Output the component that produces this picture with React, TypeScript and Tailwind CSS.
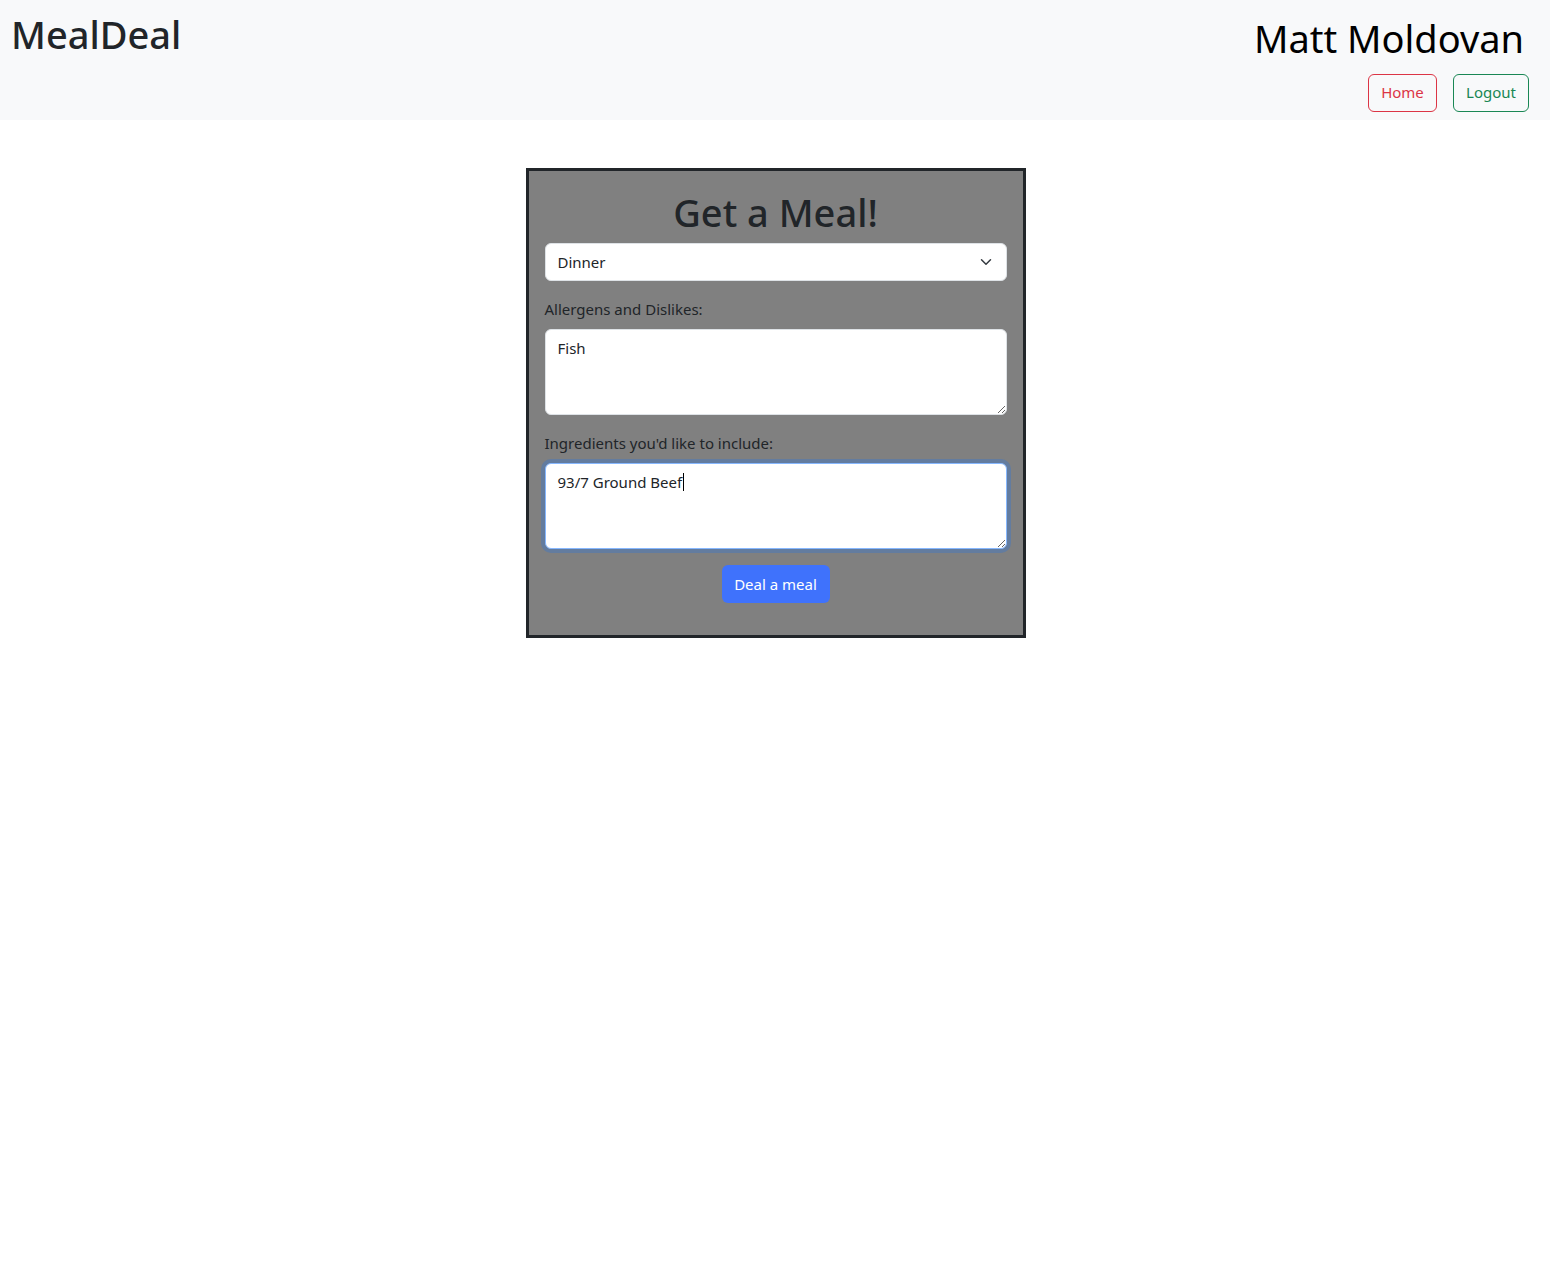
import React from "react";

const font = { fontFamily: '"Noto Sans", "Open Sans", sans-serif' };

export default function App() {
  return (
    <div className="min-h-[1268px] bg-white text-[#212529]" style={font}>
      <nav className="flex h-[120px] items-start justify-between bg-[#f8f9fa]">
        <h1 className="ml-[11px] mt-[12px] text-[38px] font-medium leading-[1.2] text-[#212529]">MealDeal</h1>
        <div className="mr-[21px] mt-[16px] flex flex-col items-end">
          <div className="mr-[5px] text-[38px] leading-[1.2] text-black">Matt Moldovan</div>
          <div className="mt-[12px] flex gap-4">
            <button className="h-[38px] w-[69px] rounded-[6px] border border-[#dc3545] text-[15px] text-[#dc3545]">Home</button>
            <button className="h-[38px] w-[76px] rounded-[6px] border border-[#198754] text-[15px] text-[#198754]">Logout</button>
          </div>
        </div>
      </nav>
      <div className="flex justify-center pt-[48px]">
        <div className="ml-[1px] w-[500px] border-[3px] border-[#212529] bg-[#808080] px-4 pb-[32px] pt-4">
          <h1 className="mb-2 pt-[2px] text-center text-[38px] font-medium leading-[46px] text-[#212529]">Get a Meal!</h1>
          <div className="relative">
            <select
              defaultValue="Dinner"
              className="block h-[38px] w-full appearance-none rounded-[6px] border border-[#dee2e6] bg-white pl-3 pr-9 text-[15px] text-[#212529] outline-none"
            >
              <option>Breakfast</option>
              <option>Lunch</option>
              <option>Dinner</option>
            </select>
            <svg className="pointer-events-none absolute right-[13px] top-[13px]" width="16" height="12" viewBox="0 0 16 16">
              <path d="m2 5 6 6 6-6" fill="none" stroke="#343a40" strokeLinecap="round" strokeLinejoin="round" strokeWidth="2" />
            </svg>
          </div>
          <label className="mb-2 mt-4 block text-[15px] leading-6 text-[#212529]">Allergens and Dislikes:</label>
          <textarea
            rows={3}
            defaultValue="Fish"
            className="block h-[86px] w-full rounded-[6px] border border-[#dee2e6] bg-white px-3 py-[6px] text-[15px] leading-6 text-[#212529] outline-none"
          />
          <label className="mb-2 mt-4 block text-[15px] leading-6 text-[#212529]">Ingredients you'd like to include:</label>
          <div className="relative">
            <textarea
              rows={3}
              defaultValue="93/7 Ground Beef"
              className="block h-[86px] w-full rounded-[6px] border border-[#86b7fe] bg-white px-3 py-[6px] text-[15px] leading-6 text-[#212529] shadow-[0_0_0_4px_rgba(13,110,253,0.25)] outline-none"
            />
            <div className="pointer-events-none absolute left-[13px] top-[7px] flex h-6 items-center text-[15px] leading-6">
              <span className="invisible">93/7 Ground Beef</span>
              <span className="ml-[1px] inline-block h-[18px] w-px bg-black" />
            </div>
          </div>
          <div className="mt-4 flex justify-center">
            <button className="h-[38px] w-[108px] rounded-[6px] bg-[#3f72fc] text-[15px] text-white">Deal a meal</button>
          </div>
        </div>
      </div>
    </div>
  );
}
